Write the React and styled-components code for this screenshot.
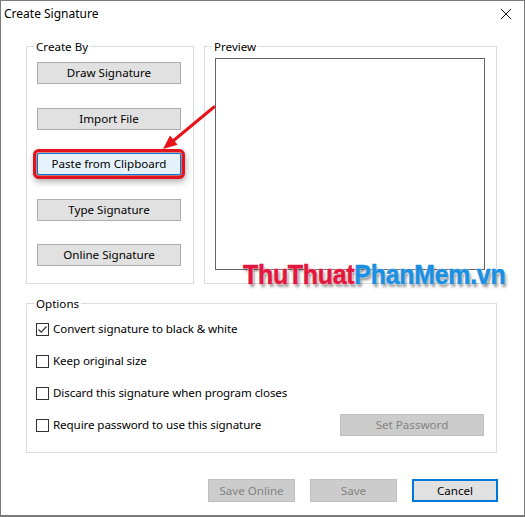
import React from "react";
import styled, { createGlobalStyle } from "styled-components";

const GlobalStyle = createGlobalStyle`
  html, body {
    margin: 0;
    padding: 0;
    background: #ffffff;
  }
  * {
    box-sizing: border-box;
  }
`;

const Window = styled.div`
  position: relative;
  width: 525px;
  height: 517px;
  border: 1px solid #7a7a7a;
  border-bottom-width: 2px;
  background: #ffffff;
  font-family: "Noto Sans", "Open Sans", sans-serif;
  font-size: 11.6px;
  color: #000000;
  overflow: hidden;
`;

const TitleBar = styled.div`
  height: 29px;
  display: flex;
  align-items: center;
  justify-content: space-between;
  padding: 0 12px 0 3px;
`;

const Title = styled.div`
  font-size: 12px;
  line-height: 16px;
  margin-top: -3px;
`;

const Close = styled.div`
  width: 12px;
  height: 12px;
  margin-top: -4px;
  display: flex;
`;

const Body = styled.div`
  padding: 16px 27px 0 25px;
  display: flex;
  flex-direction: column;
`;

const TopRow = styled.div`
  display: flex;
  gap: 10px;
`;

const Group = styled.div`
  position: relative;
  width: ${({ $w }) => $w}px;
  height: ${({ $h }) => $h}px;
  border: 1px solid #dcdcdc;
`;

const Legend = styled.span`
  position: absolute;
  top: -8px;
  left: 7px;
  padding: 0 2px;
  background: #ffffff;
  line-height: 16px;
`;

const ButtonColumn = styled.div`
  display: flex;
  flex-direction: column;
  gap: 23.5px;
  padding: 15px 0 0 10px;
`;

const Button = styled.div`
  width: ${({ $w }) => $w || 144}px;
  height: ${({ $h }) => $h || 22}px;
  display: flex;
  align-items: center;
  justify-content: center;
  background: ${({ $variant }) =>
    $variant === "disabled" ? "#cccccc" : $variant === "hot" ? "#e5f1fb" : "#e1e1e1"};
  border: ${({ $variant }) =>
    $variant === "default"
      ? "2px solid #0078d7"
      : $variant === "disabled"
      ? "1px solid #bfbfbf"
      : $variant === "hot"
      ? "1px solid #0078d7"
      : "1px solid #adadad"};
  color: ${({ $variant }) => ($variant === "disabled" ? "#838383" : "#000000")};
  line-height: 16px;
  ${({ $marked }) =>
    $marked &&
    `
    border-radius: 2px;
    outline: 3px solid #e3131e;
    outline-offset: 1px;
    box-shadow: 0 0 0 4px rgba(227, 19, 30, 0.4), 1px 3px 6px 4px rgba(0, 0, 0, 0.3);
  `}
`;

const PreviewBox = styled.div`
  margin: 11px 0 0 10px;
  width: 270px;
  height: 212px;
  border: 1px solid #646464;
`;

const Options = styled(Group)`
  margin-top: 19px;
  padding: 14px 12px 0 9px;
  display: flex;
  flex-direction: column;
  gap: 10px;
`;

const OptionRow = styled.div`
  height: 22px;
  display: flex;
  align-items: center;
  justify-content: space-between;
`;

const CheckLabel = styled.div`
  display: flex;
  align-items: center;
  gap: 4px;
  line-height: 16px;
  letter-spacing: -0.1px;
`;

const Box = styled.div`
  width: 13px;
  height: 13px;
  border: 1px solid #333333;
  background: #ffffff;
  display: flex;
  align-items: center;
  justify-content: center;
`;

const Footer = styled.div`
  margin-top: 26px;
  display: flex;
  justify-content: flex-end;
  gap: 15px;
  margin-right: -1px;
`;

const Arrow = styled.svg`
  position: absolute;
  left: 0;
  top: 0;
  pointer-events: none;
`;

const Watermark = styled.div`
  position: absolute;
  left: 242px;
  top: 260px;
  font-family: "Liberation Sans", Arial, sans-serif;
  font-weight: 700;
  font-size: 28px;
  line-height: 28px;
  letter-spacing: -0.3px;
  white-space: nowrap;
  transform: scaleX(0.89);
  transform-origin: left top;
  -webkit-text-stroke: 0.6px currentColor;
  text-shadow: 0 0 2px #ffffff, 0 0 2px #ffffff, 2px 3px 3px rgba(0, 0, 0, 0.45);
`;

const Red = styled.span`
  color: #e3173d;
`;

const Blue = styled.span`
  color: #1b8fe0;
`;

const Checkbox = ({ checked, children }) => (
  <CheckLabel>
    <Box>
      {checked && (
        <svg width="11" height="11" viewBox="0 0 11 11">
          <polyline points="1.5,5.5 4.2,8.2 9.5,2.5" fill="none" stroke="#333" strokeWidth="1.2" />
        </svg>
      )}
    </Box>
    {children}
  </CheckLabel>
);

export default function App() {
  return (
    <>
      <GlobalStyle />
      <Window>
        <TitleBar>
          <Title>Create Signature</Title>
          <Close>
            <svg width="12" height="12" viewBox="0 0 12 12">
              <path d="M1 1 L11 11 M11 1 L1 11" stroke="#111" strokeWidth="1" />
            </svg>
          </Close>
        </TitleBar>
        <Body>
          <TopRow>
            <Group $w={168} $h={238}>
              <Legend>Create By</Legend>
              <ButtonColumn>
                <Button>Draw Signature</Button>
                <Button>Import File</Button>
                <Button $variant="hot" $marked>
                  Paste from Clipboard
                </Button>
                <Button>Type Signature</Button>
                <Button>Online Signature</Button>
              </ButtonColumn>
            </Group>
            <Group $w={293} $h={238}>
              <Legend>Preview</Legend>
              <PreviewBox />
            </Group>
          </TopRow>
          <Options $w={471} $h={150}>
            <Legend>Options</Legend>
            <OptionRow>
              <Checkbox checked>Convert signature to black &amp; white</Checkbox>
            </OptionRow>
            <OptionRow>
              <Checkbox>Keep original size</Checkbox>
            </OptionRow>
            <OptionRow>
              <Checkbox>Discard this signature when program closes</Checkbox>
            </OptionRow>
            <OptionRow>
              <Checkbox>Require password to use this signature</Checkbox>
              <Button $variant="disabled" $h={22}>
                Set Password
              </Button>
            </OptionRow>
          </Options>
          <Footer>
            <Button $variant="disabled" $w={87} $h={23}>
              Save Online
            </Button>
            <Button $variant="disabled" $w={87} $h={23}>
              Save
            </Button>
            <Button $variant="default" $w={86} $h={23}>
              Cancel
            </Button>
          </Footer>
        </Body>
        <Arrow width="525" height="517" viewBox="0 0 525 517">
          <line x1="213" y1="106" x2="172" y2="140" stroke="#e8141c" strokeWidth="3" strokeLinecap="round" />
          <polygon points="162,148 176.6,143.7 169,134.5" fill="#e8141c" />
        </Arrow>
        <Watermark>
          <Red>ThuThuat</Red>
          <Blue>PhanMem.vn</Blue>
        </Watermark>
      </Window>
    </>
  );
}
